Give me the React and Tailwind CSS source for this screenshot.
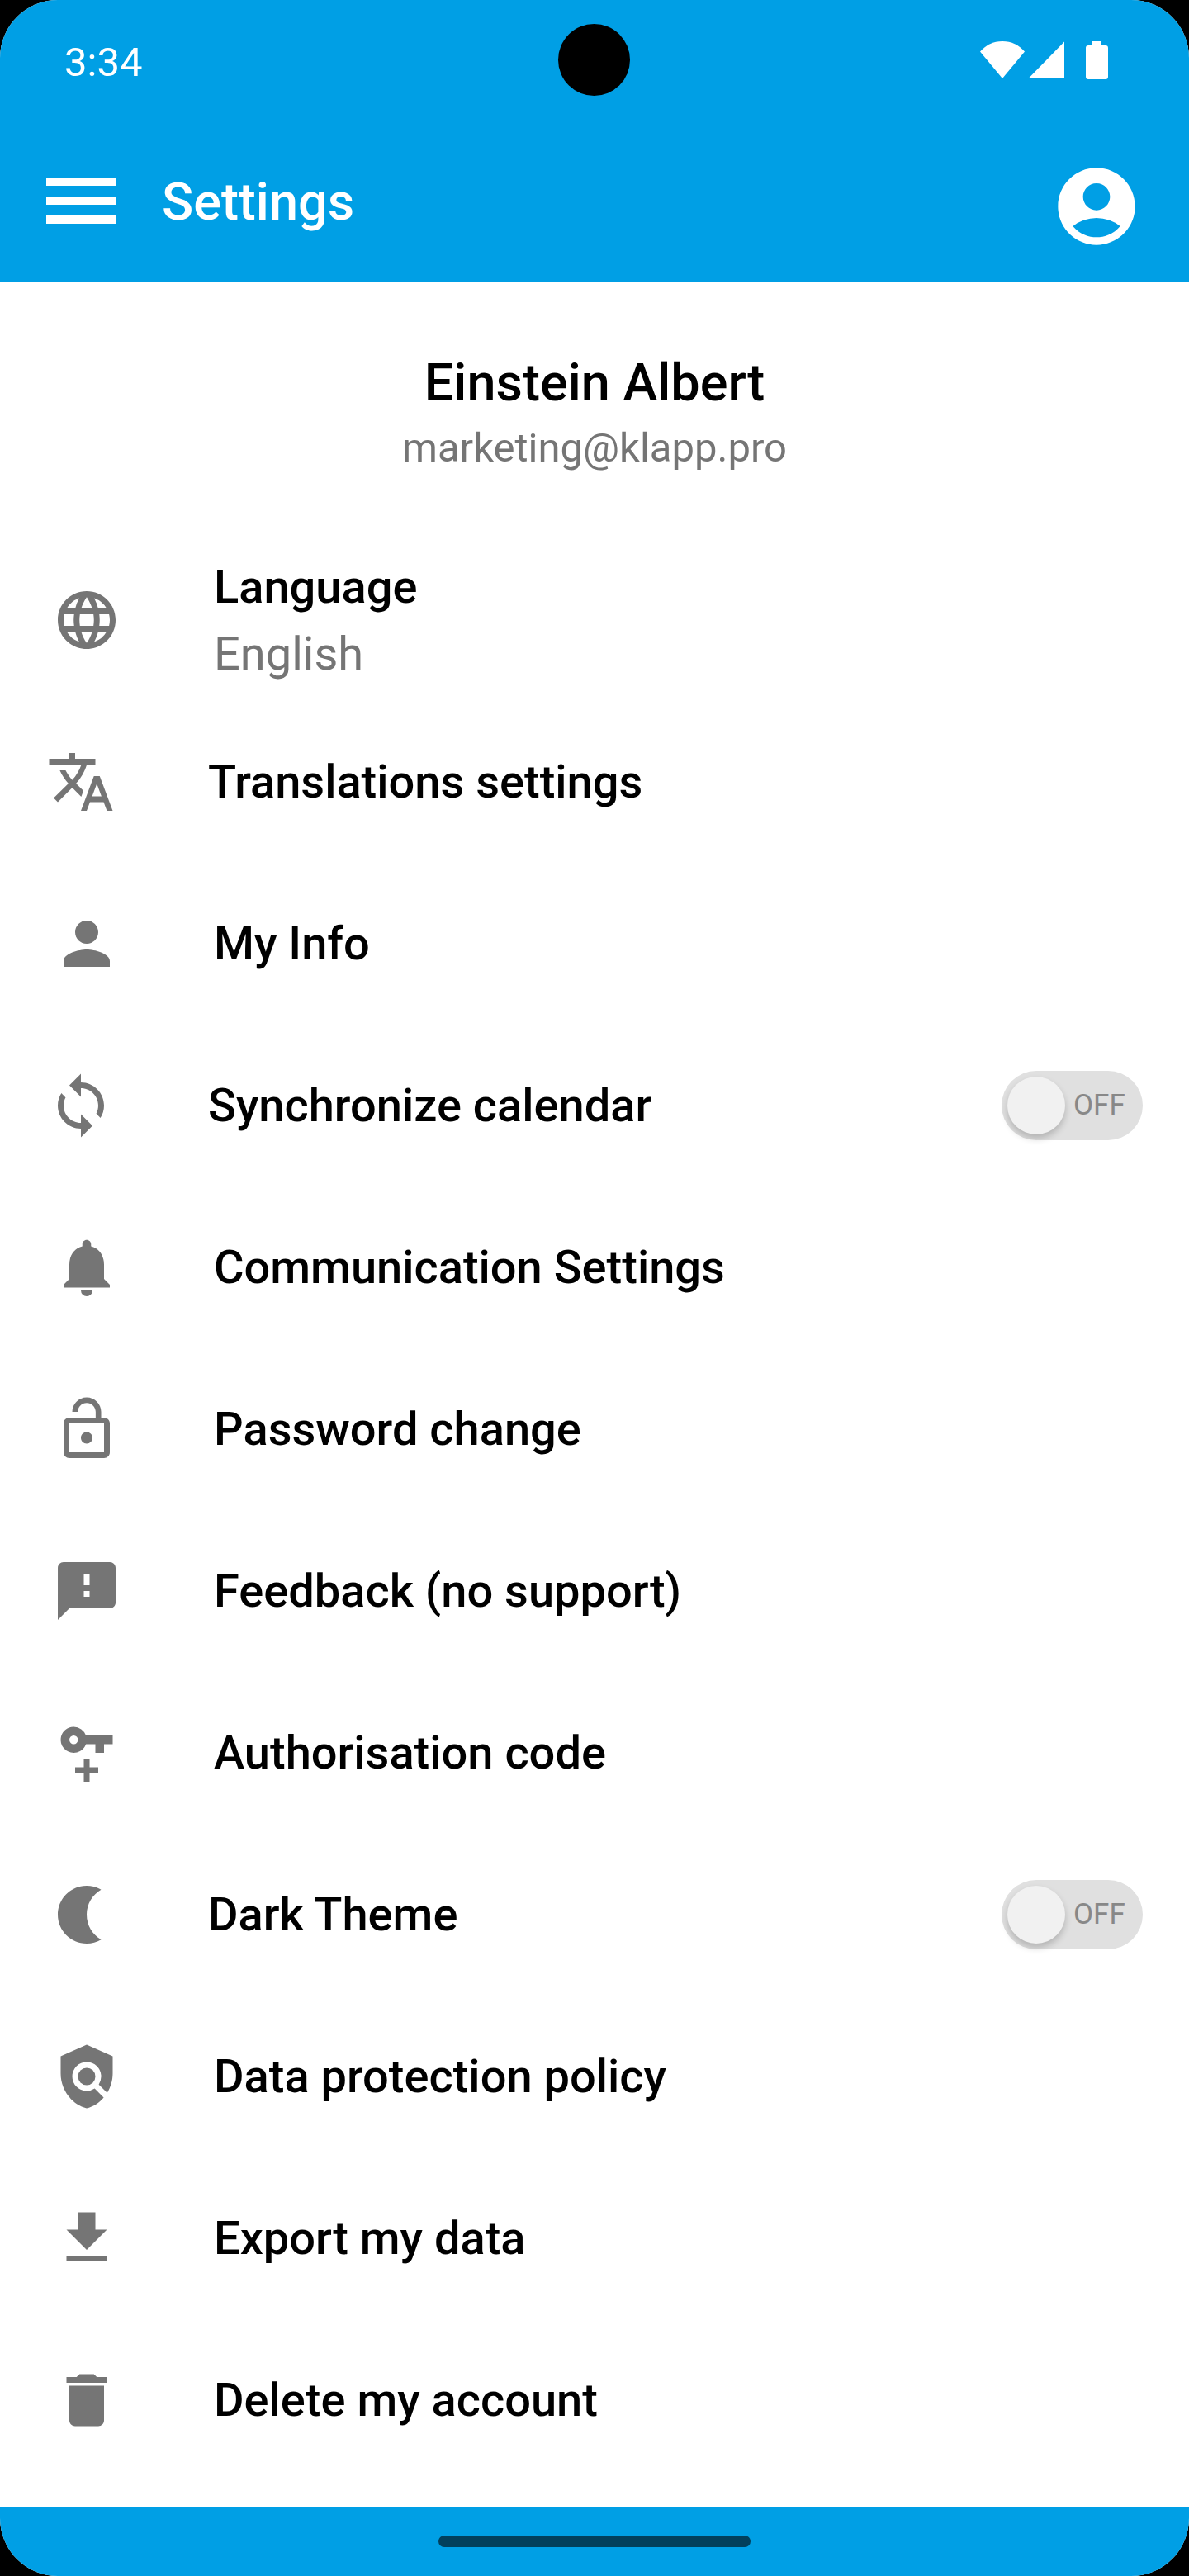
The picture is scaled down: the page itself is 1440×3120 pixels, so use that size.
import {
  MdLanguage,
  MdTranslate,
  MdPerson,
  MdSync,
  MdNotifications,
  MdLockOpen,
  MdFeedback,
  MdPolicy,
  MdDelete,
  MdAccountCircle,
} from "react-icons/md";

function Glyph({ d, className }) {
  return (
    <svg viewBox="0 0 24 24" fill="currentColor" className={className}>
      <path fillRule="evenodd" d={d} />
    </svg>
  );
}

const KeyPlus = ({ className }) => (
  <Glyph
    className={className}
    d="M7.5 3a4.5 4.5 0 1 0 4.25 6H15v3h3V9h3V6h-9.25A4.5 4.5 0 0 0 7.5 3zM7.5 6a1.5 1.5 0 1 1 0 3 1.5 1.5 0 0 1 0-3zM11 14v3H8v2h3v3h2v-3h3v-2h-3v-3z"
  />
);

const Moon = ({ className }) => (
  <Glyph
    className={className}
    d="M14 2c1.82 0 3.53.5 5 1.35-2.99 1.73-5 4.95-5 8.65s2.01 6.92 5 8.65c-1.47.85-3.18 1.35-5 1.35-5.52 0-10-4.48-10-10S8.48 2 14 2z"
  />
);

const Download = ({ className }) => (
  <Glyph className={className} d="M19 9h-4V3H9v6H5l7 7 7-7zM5 18v2h14v-2H5z" />
);

const items = [
  { icon: MdLanguage, label: "Language", value: "English" },
  { icon: MdTranslate, label: "Translations settings", flush: true },
  { icon: MdPerson, label: "My Info" },
  { icon: MdSync, label: "Synchronize calendar", flush: true, toggle: true },
  { icon: MdNotifications, label: "Communication Settings" },
  { icon: MdLockOpen, label: "Password change" },
  { icon: MdFeedback, label: "Feedback (no support)" },
  { icon: KeyPlus, label: "Authorisation code" },
  { icon: Moon, label: "Dark Theme", flush: true, toggle: true },
  { icon: MdPolicy, label: "Data protection policy" },
  { icon: Download, label: "Export my data" },
  { icon: MdDelete, label: "Delete my account" },
];

function Toggle() {
  return (
    <button className="flex h-[84px] w-[171px] items-center rounded-full bg-[#e0e0e0] pl-[7px]">
      <span className="size-[70px] rounded-full bg-[#f1f1f1] shadow-[0_5px_9px_rgba(0,0,0,0.2)]" />
      <span className="mb-[2px] ml-[10px] text-[35px] leading-none text-[#888888]">OFF</span>
    </button>
  );
}

function Row({ item }) {
  const Icon = item.icon;
  return (
    <li className={item.flush ? "flex h-[196px] items-center pl-[56px] pr-[56px]" : "flex h-[196px] items-center pl-[63px] pr-[56px]"}>
      <Icon className="mr-[112px] size-[84px] shrink-0 text-[#757575]" />
      <div className="flex-1">
        <div className="text-[56px] font-medium leading-[66px] text-black">{item.label}</div>
        {item.value && (
          <div className="mt-[15px] text-[56px] leading-[66px] text-[#757575]">{item.value}</div>
        )}
      </div>
      {item.toggle && <Toggle />}
    </li>
  );
}

function StatusBar() {
  return (
    <div className="grid h-[145px] grid-cols-3 items-center pl-[78px] pr-[98px] text-white">
      <span className="mt-[6px] text-[49px] leading-[56px]">3:34</span>
      <span className="-mr-[20px] size-[87px] justify-self-center rounded-full bg-black" />
      <svg viewBox="0 0 155 46" fill="currentColor" className="h-[46px] w-[155px] justify-self-end">
        <path d="M0 12.500C7 4.500 16 0 27 0s20 4.500 27 12.500L27 45z" />
        <path d="M102 .5V45H58.500z" />
        <path d="M135.500 0h11v5h5.500a3 3 0 0 1 3 3v35a3 3 0 0 1-3 3h-21a3 3 0 0 1-3-3V8a3 3 0 0 1 3-3h4.500z" />
      </svg>
    </div>
  );
}

function AppBar() {
  return (
    <div className="flex h-[196px] items-center pl-[56px] pr-[56px] text-white">
      <div className="flex w-[84px] flex-col gap-[13px]">
        <span className="h-[10px] bg-white" />
        <span className="h-[10px] bg-white" />
        <span className="h-[10px] bg-white" />
      </div>
      <h1 className="ml-[56px] mt-[4px] flex-1 text-[63px] font-medium leading-[74px]">Settings</h1>
      <MdAccountCircle className="mt-[14px] size-[112px]" />
    </div>
  );
}

export default function App() {
  return (
    <div className="h-[3120px] w-[1440px] bg-black font-['Roboto',sans-serif]">
      <div className="flex h-full flex-col overflow-hidden rounded-[70px] bg-white">
        <header className="h-[341px] bg-[#009fe5]">
          <StatusBar />
          <AppBar />
        </header>
        <main className="flex-1">
          <section className="flex h-[312px] flex-col items-center pt-[86px]">
            <h2 className="text-[63px] font-medium leading-[74px] text-black">Einstein Albert</h2>
            <p className="mt-[13px] text-[49px] leading-[58px] text-[#757575]">marketing@klapp.pro</p>
          </section>
          <ul>
            {items.map((item) => (
              <Row key={item.label} item={item} />
            ))}
          </ul>
        </main>
        <footer className="flex h-[84px] justify-center bg-[#009fe5] pt-[35px]">
          <span className="h-[14px] w-[378px] rounded-full bg-[#02405c]" />
        </footer>
      </div>
    </div>
  );
}
